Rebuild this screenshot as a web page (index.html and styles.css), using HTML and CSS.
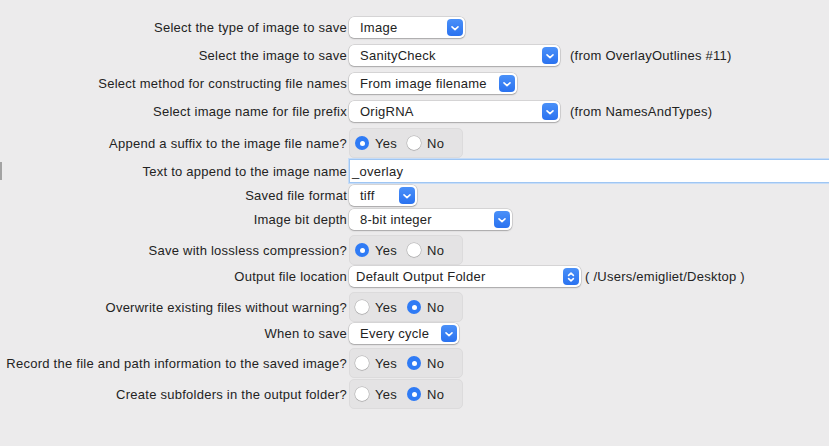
FILE: index.html
```html
<!DOCTYPE html>
<html>
<head>
<meta charset="utf-8">
<link rel="stylesheet" href="styles.css">
</head>
<body>
<div class="sash"></div>
<div class="form">
  <div class="row">
    <span class="lbl">Select the type of image to save</span>
    <div class="popup w-image"><span class="val">Image</span><span class="btn"><svg viewBox="0 0 16 16"><path d="M5 6.8 L8 9.6 L11 6.8"/></svg></span></div>
  </div>
  <div class="row gap-l">
    <span class="lbl">Select the image to save</span>
    <div class="popup w-wide"><span class="val">SanityCheck</span><span class="btn"><svg viewBox="0 0 16 16"><path d="M5 6.8 L8 9.6 L11 6.8"/></svg></span></div>
    <span class="note">(from OverlayOutlines #11)</span>
  </div>
  <div class="row gap-l">
    <span class="lbl">Select method for constructing file names</span>
    <div class="popup w-method"><span class="val">From image filename</span><span class="btn"><svg viewBox="0 0 16 16"><path d="M5 6.8 L8 9.6 L11 6.8"/></svg></span></div>
  </div>
  <div class="row gap-l">
    <span class="lbl">Select image name for file prefix</span>
    <div class="popup w-wide"><span class="val">OrigRNA</span><span class="btn"><svg viewBox="0 0 16 16"><path d="M5 6.8 L8 9.6 L11 6.8"/></svg></span></div>
    <span class="note">(from NamesAndTypes)</span>
  </div>
  <div class="row gap-r6">
    <span class="lbl">Append a suffix to the image file name?</span>
    <div class="radios"><span class="radio on"></span><span class="opt">Yes</span><span class="radio"></span><span class="opt">No</span></div>
  </div>
  <div class="row gap-s">
    <span class="lbl">Text to append to the image name</span>
    <div class="textbox">_overlay</div>
  </div>
  <div class="row gap-2">
    <span class="lbl">Saved file format</span>
    <div class="popup w-tiff"><span class="val">tiff</span><span class="btn"><svg viewBox="0 0 16 16"><path d="M5 6.8 L8 9.6 L11 6.8"/></svg></span></div>
  </div>
  <div class="row gap-m">
    <span class="lbl">Image bit depth</span>
    <div class="popup w-depth"><span class="val">8-bit integer</span><span class="btn"><svg viewBox="0 0 16 16"><path d="M5 6.8 L8 9.6 L11 6.8"/></svg></span></div>
  </div>
  <div class="row gap-r">
    <span class="lbl">Save with lossless compression?</span>
    <div class="radios"><span class="radio on"></span><span class="opt">Yes</span><span class="radio"></span><span class="opt">No</span></div>
  </div>
  <div class="row gap-s">
    <span class="lbl">Output file location</span>
    <div class="popup w-loc"><span class="val loc">Default Output Folder</span><span class="btn"><svg viewBox="0 0 16 16"><path d="M5.6 6.4 L8 4.2 L10.4 6.4 M5.6 9.6 L8 11.8 L10.4 9.6"/></svg></span></div>
    <span class="note loc-note">( /Users/emigliet/Desktop )</span>
  </div>
  <div class="row gap-r">
    <span class="lbl">Overwrite existing files without warning?</span>
    <div class="radios"><span class="radio"></span><span class="opt">Yes</span><span class="radio on"></span><span class="opt">No</span></div>
  </div>
  <div class="row gap-s">
    <span class="lbl">When to save</span>
    <div class="popup w-when"><span class="val">Every cycle</span><span class="btn"><svg viewBox="0 0 16 16"><path d="M5 6.8 L8 9.6 L11 6.8"/></svg></span></div>
  </div>
  <div class="row gap-r4">
    <span class="lbl">Record the file and path information to the saved image?</span>
    <div class="radios"><span class="radio"></span><span class="opt">Yes</span><span class="radio on"></span><span class="opt">No</span></div>
  </div>
  <div class="row gap-s">
    <span class="lbl">Create subfolders in the output folder?</span>
    <div class="radios"><span class="radio"></span><span class="opt">Yes</span><span class="radio on"></span><span class="opt">No</span></div>
  </div>
</div>
</body>
</html>
```

FILE: styles.css
```css
html, body {
  margin: 0;
  padding: 0;
}
body {
  width: 829px;
  height: 446px;
  overflow: hidden;
  position: relative;
  background: #ecebec;
  font-family: "Liberation Sans", Arial, sans-serif;
  font-size: 13px;
  letter-spacing: 0.25px;
  color: #232323;
}
.sash {
  position: absolute;
  left: 0;
  top: 162px;
  width: 2px;
  height: 18px;
  background: #a3a3a3;
}
.form {
  display: flex;
  flex-direction: column;
  padding-top: 17px;
}
.row {
  display: flex;
  align-items: center;
}
.gap-l { margin-top: 7px; }
.gap-m { margin-top: 3px; }
.gap-2 { margin-top: 2px; }
.gap-s { margin-top: 1px; }
.gap-r { margin-top: 5px; }
.gap-r4 { margin-top: 4px; }
.gap-r6 { margin-top: 6px; }
.lbl {
  width: 347px;
  flex: none;
  text-align: right;
  white-space: nowrap;
  margin-right: 2px;
}
.popup {
  height: 21px;
  box-sizing: border-box;
  background: #fff;
  border-radius: 5px;
  box-shadow: 0 0 0 0.5px rgba(0,0,0,0.18), 0 1px 1.5px rgba(0,0,0,0.22);
  display: flex;
  align-items: center;
  justify-content: space-between;
  padding: 0 2px 0 11px;
  flex: none;
}
.w-image { width: 116px; }
.w-wide { width: 211px; }
.w-method { width: 168px; }
.w-tiff { width: 68px; }
.w-depth { width: 163px; }
.w-loc { width: 232px; padding-left: 7px; }
.w-when { width: 110px; }
.val {
  white-space: nowrap;
}
.btn {
  width: 16px;
  height: 17px;
  border-radius: 4px;
  background: linear-gradient(#4a90f8, #2a72f0);
  display: flex;
  align-items: center;
  justify-content: center;
  flex: none;
}
.btn svg {
  width: 16px;
  height: 16px;
}
.btn path {
  fill: none;
  stroke: #fff;
  stroke-width: 1.6;
  stroke-linecap: round;
  stroke-linejoin: round;
}
.note {
  margin-left: 10px;
  white-space: nowrap;
}
.loc-note {
  margin-left: 4px;
}
.radios {
  width: 114px;
  height: 30px;
  box-sizing: border-box;
  background: #e4e3e4;
  border: 1px solid #dcdbdc;
  border-radius: 5px;
  display: flex;
  align-items: center;
  padding-left: 5px;
  flex: none;
}
.radio {
  width: 14px;
  height: 14px;
  box-sizing: border-box;
  border-radius: 50%;
  background: #fff;
  box-shadow: 0 0 0 0.5px rgba(0,0,0,0.22), 0 0.5px 1px rgba(0,0,0,0.2);
  flex: none;
  position: relative;
}
.radio.on {
  background: #2f7bf5;
  box-shadow: none;
}
.radio.on::after {
  content: "";
  position: absolute;
  left: 4.5px;
  top: 4.5px;
  width: 5px;
  height: 5px;
  border-radius: 50%;
  background: #fff;
}
.opt {
  margin-left: 6px;
  margin-right: 8px;
  width: 24px;
}
.textbox {
  flex: 1;
  height: 24px;
  box-sizing: border-box;
  background: #fff;
  border: 1px solid #9fc6f3;
  border-right: none;
  box-shadow: 0 0 0 1px #c6dcf7;
  padding-left: 2px;
  display: flex;
  align-items: center;
}
```
